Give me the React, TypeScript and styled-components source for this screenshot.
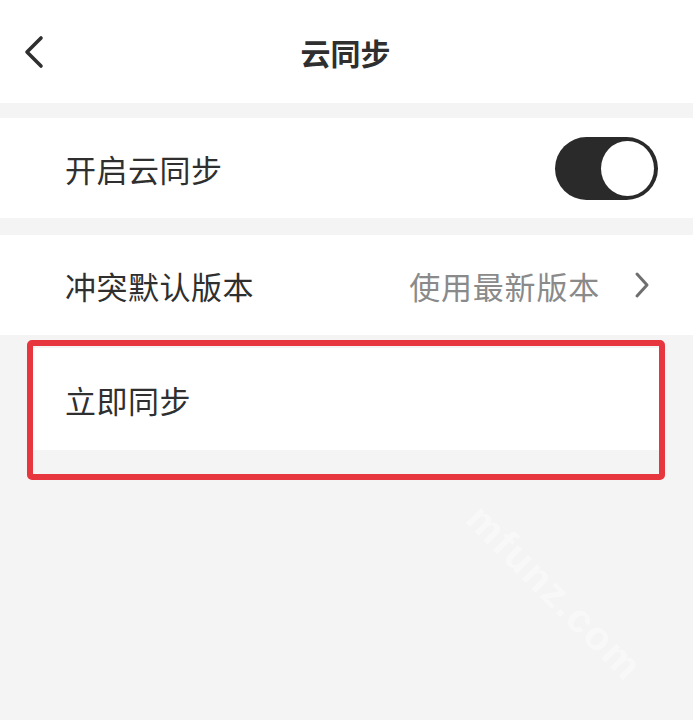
import styled, { createGlobalStyle } from "styled-components";

const colors = {
  pageBg: "#f4f4f4",
  card: "#ffffff",
  text: "#2f2f2f",
  muted: "#8a8a8a",
  chevron: "#6f6f6f",
  toggle: "#2a2a2a",
  mark: "#e8363f",
};

const GlobalStyle = createGlobalStyle`
  html, body {
    margin: 0;
    padding: 0;
    background: ${colors.pageBg};
  }
  body {
    font-family: "Noto Sans CJK SC", "Noto Sans", sans-serif;
    color: ${colors.text};
  }
`;

const Screen = styled.div`
  position: relative;
  width: 693px;
  height: 720px;
  overflow: hidden;
  background: ${colors.pageBg};
`;

const Header = styled.header`
  height: 103px;
  background: ${colors.card};
  display: grid;
  grid-template-columns: 70px 1fr 70px;
  align-items: center;
`;

const BackButton = styled.button`
  border: none;
  background: none;
  padding: 0 0 0 22px;
  display: flex;
  align-items: center;
  cursor: pointer;
`;

const Title = styled.h1`
  margin: 0;
  text-align: center;
  font-size: 30px;
  font-weight: 700;
  color: ${colors.text};
  padding-right: 2px;
`;

const Section = styled.div<{ $gap: number }>`
  margin-top: ${(p) => p.$gap}px;
`;

const Row = styled.div<{ $height: number }>`
  height: ${(p) => p.$height}px;
  background: ${colors.card};
  display: flex;
  align-items: center;
  justify-content: space-between;
  padding: 0 34px 0 65px;
`;

const LinkRow = styled(Row)`
  padding-right: 43px;
`;

const Label = styled.span`
  font-size: 31px;
  letter-spacing: 0.5px;
  color: ${colors.text};
`;

const Trailing = styled.div`
  display: flex;
  align-items: center;
  gap: 34px;
`;

const Value = styled.span`
  font-size: 31px;
  letter-spacing: 0.8px;
  color: ${colors.muted};
`;

const Toggle = styled.div`
  width: 103px;
  height: 63px;
  margin-right: 1px;
  border-radius: 32px;
  background: ${colors.toggle};
  display: flex;
  align-items: center;
  justify-content: flex-end;
  padding-right: 4px;
  box-sizing: border-box;
`;

const Knob = styled.div`
  width: 53px;
  height: 55px;
  border-radius: 50%;
  background: #fff;
`;

const Highlight = styled.div`
  margin: 5px 28px 0 27px;
  border: 6px solid ${colors.mark};
  border-radius: 5px;
  height: 128px;
  background: ${colors.pageBg};
`;

const HighlightRow = styled(Row)`
  padding-left: 32px;
  margin-top: 2px;
`;

const Watermark = styled.div`
  position: absolute;
  left: 440px;
  top: 570px;
  transform: rotate(45deg);
  font-family: "Liberation Sans", sans-serif;
  font-size: 40px;
  font-weight: 700;
  color: rgba(255, 255, 255, 0.45);
  letter-spacing: 2px;
  pointer-events: none;
`;

const ChevronLeft = () => (
  <svg width="24" height="34" viewBox="0 0 24 34" fill="none">
    <path
      d="M19 3 L5 17 L19 31"
      stroke={colors.text}
      strokeWidth="3.6"
      strokeLinecap="round"
      strokeLinejoin="round"
    />
  </svg>
);

const ChevronRight = () => (
  <svg width="16" height="28" viewBox="0 0 16 28" fill="none">
    <path
      d="M3 3 L13 14 L3 25"
      stroke={colors.chevron}
      strokeWidth="3"
      strokeLinecap="round"
      strokeLinejoin="round"
    />
  </svg>
);

const App = () => {
  return (
    <Screen>
      <GlobalStyle />
      <Header>
        <BackButton aria-label="返回">
          <ChevronLeft />
        </BackButton>
        <Title>云同步</Title>
        <span />
      </Header>

      <Section $gap={15}>
        <Row $height={100}>
          <Label>开启云同步</Label>
          <Toggle>
            <Knob />
          </Toggle>
        </Row>
      </Section>

      <Section $gap={17}>
        <LinkRow $height={100}>
          <Label>冲突默认版本</Label>
          <Trailing>
            <Value>使用最新版本</Value>
            <ChevronRight />
          </Trailing>
        </LinkRow>
      </Section>

      <Highlight>
        <HighlightRow $height={102}>
          <Label>立即同步</Label>
        </HighlightRow>
      </Highlight>

      <Watermark>mfunz.com</Watermark>
    </Screen>
  );
};

export default App;
